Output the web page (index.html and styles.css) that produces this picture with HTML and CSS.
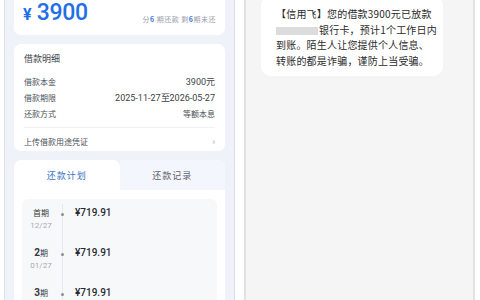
FILE: index.html
```html
<!DOCTYPE html>
<html lang="zh-CN">
<head>
  <meta charset="UTF-8">
  <title>借款详情</title>
  <link rel="stylesheet" href="styles.css">
</head>
<body>
  <div class="tela">

    <!-- Lado esquerdo: app -->
    <div class="app">
      <div class="card topo">
        <div class="valor"><span class="moeda">¥</span> 3900</div>
        <div class="parcelas">分<b>6</b> 期还款 剩<b>6</b>期未还</div>
      </div>

      <div class="card detalhe">
        <div class="titulo">借款明细</div>
        <div class="linha"><span>借款本金</span><span class="num">3900元</span></div>
        <div class="linha"><span>借款期限</span><span class="num">2025-11-27至2026-05-27</span></div>
        <div class="linha"><span>还款方式</span><span>等额本息</span></div>
        <div class="separador"></div>
        <div class="linha upload"><span>上传借款用途凭证</span><span class="seta">›</span></div>
      </div>

      <div class="card plano">
        <div class="abas">
          <div class="aba ativa">还款计划</div>
          <div class="aba">还款记录</div>
        </div>
        <div class="lista">
          <div class="item">
            <div class="periodo"><span>首期</span><small>12/27</small></div>
            <div class="marca"><i></i></div>
            <div class="quantia">¥719.91</div>
          </div>
          <div class="item">
            <div class="periodo"><span><b>2</b>期</span><small>01/27</small></div>
            <div class="marca"><i></i></div>
            <div class="quantia">¥719.91</div>
          </div>
          <div class="item">
            <div class="periodo"><span><b>3</b>期</span><small>02/27</small></div>
            <div class="marca"><i></i></div>
            <div class="quantia">¥719.91</div>
          </div>
        </div>
      </div>
    </div>

    <!-- Lado direito: mensagem -->
    <div class="sms">
      <div class="balao">
        【信用飞】您的借款3900元已放款<br><span class="borrado"></span>银行卡，预计1个工作日内<br>到账。陌生人让您提供个人信息、<br>转账的都是诈骗，谨防上当受骗。
      </div>
    </div>

  </div>
</body>
</html>
```

FILE: styles.css
```css
body {
  margin: 0;
  background: #ffffff;
  font-family: "Noto Sans CJK SC", "Noto Sans", sans-serif;
}

.tela {
  display: flex;
  height: 300px;
  overflow: hidden;
}

/* Coluna do app */
.app {
  box-sizing: border-box;
  flex: none;
  width: 231px;
  margin-left: 4px;
  padding: 0 9px;
  background: #eff3f9;
  border-left: 1px solid #dcdfe4;
  border-right: 1px solid #dcdfe4;
  display: flex;
  flex-direction: column;
  gap: 9px;
}

.card {
  flex-shrink: 0;
  background: #ffffff;
  border-radius: 7px;
}

.topo {
  margin-top: -6px;
  height: 41px;
  box-sizing: border-box;
  padding: 0 9px;
  display: flex;
  justify-content: space-between;
  align-items: flex-end;
}

.valor {
  color: #1f6fe6;
  font-size: 23px;
  line-height: 26px;
  font-family: "Roboto", sans-serif;
  font-weight: 500;
  margin-bottom: 7px;
  letter-spacing: -0.3px;
}

.moeda {
  font-size: 16px;
  font-weight: 700;
}

.parcelas {
  font-size: 7px;
  color: #9aa0a8;
  margin-bottom: 11px;
  letter-spacing: 0.5px;
}

.parcelas b {
  color: #3b7be0;
  font-weight: 600;
}

/* Detalhes do empréstimo */
.detalhe {
  padding: 8px 10px 1px;
  font-size: 8px;
  color: #4a4f57;
}

.titulo {
  font-size: 9px;
  color: #3e434a;
  margin-bottom: 8px;
}

.linha {
  display: flex;
  justify-content: space-between;
  height: 16px;
  align-items: center;
}

.num {
  font-family: "Roboto", sans-serif;
  font-size: 9px;
  color: #3a3f46;
}

.separador {
  height: 1px;
  background: #f0f1f3;
  margin: 6px 0 4px;
}

.upload {
  height: 18px;
}

.seta {
  color: #9aa0a8;
  font-size: 9px;
}

/* Plano de pagamento */
.plano {
  overflow: hidden;
}

.abas {
  display: flex;
  height: 30px;
  background: #eff3f9;
}

.aba {
  flex: 1;
  display: flex;
  align-items: center;
  justify-content: center;
  font-size: 9px;
  color: #5c6168;
  background: #f3f6fd;
  letter-spacing: 1px;
}

.aba.ativa {
  background: #ffffff;
  color: #3a72c4;
  border-radius: 7px 7px 0 0;
}

.lista {
  margin: 9px 8px 0;
  background: #f7f8fa;
  border-radius: 6px;
  padding-top: 5px;
}

.item {
  display: flex;
  height: 40px;
}

.periodo {
  width: 38px;
  text-align: center;
  font-size: 8px;
  color: #333840;
  display: flex;
  flex-direction: column;
  line-height: 13px;
  padding-top: 2px;
}

.periodo b {
  font-family: "Roboto", sans-serif;
  font-size: 10px;
}

.periodo small {
  font-family: "Roboto", sans-serif;
  font-size: 8px;
  color: #a5aab1;
}

.marca {
  width: 6px;
  position: relative;
  border-left: 1px solid #e6e8ec;
  margin-left: 2px;
}

.marca i {
  position: absolute;
  left: -2px;
  top: 9px;
  width: 3px;
  height: 3px;
  background: #8c9199;
  border-radius: 50%;
}

.quantia {
  margin-left: 6px;
  padding-top: 3px;
  font-family: "Roboto", sans-serif;
  font-weight: 500;
  font-size: 10px;
  color: #272b31;
}

/* Coluna da mensagem */
.sms {
  box-sizing: border-box;
  flex: none;
  width: 231px;
  margin-left: 9px;
  background: #f5f5f5;
  border-left: 2px solid #e2e2e2;
  border-right: 2px solid #e2e2e2;
  padding: 0 30px 0 15px;
}

.balao {
  margin-top: -4px;
  background: #ffffff;
  border-radius: 10px;
  padding: 10px 8px 8px 15px;
  font-size: 10px;
  line-height: 15.5px;
  color: #2a2a2a;
  letter-spacing: 0.2px;
  white-space: nowrap;
}

.borrado {
  display: inline-block;
  width: 42px;
  height: 8px;
  background: #dcdcdc;
  vertical-align: -1px;
  margin-right: 1px;
}
```
